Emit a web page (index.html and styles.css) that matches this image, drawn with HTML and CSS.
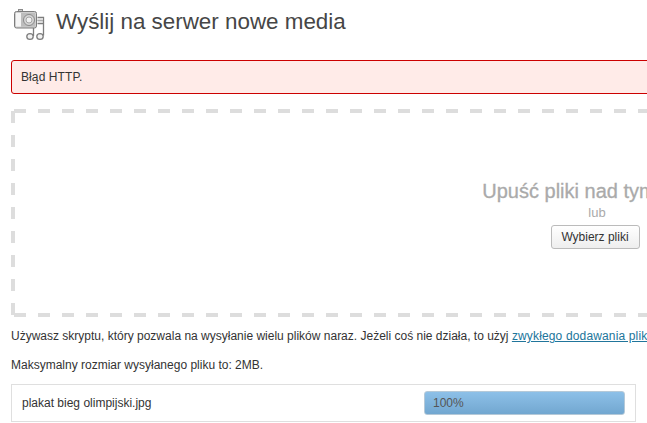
FILE: index.html
```html
<!DOCTYPE html>
<html lang="pl">
<head>
  <meta charset="UTF-8">
  <title>Wyślij na serwer nowe media</title>
  <link rel="stylesheet" href="styles.css">
</head>
<body>
  <div class="wrap">
    <div class="page-head">
      <svg class="page-icon" width="32" height="33" viewBox="14 8 32 33">
        <!-- notes -->
        <path d="M37.500 17.500h6v18M33.500 28v8M37.500 20.500h6M37.500 23.500h6" fill="none" stroke="#7d7d7d" stroke-width="1.300"/>
        <rect x="37.500" y="18" width="5.500" height="2.500" fill="#ddd"/>
        <ellipse cx="30" cy="36.500" rx="3.200" ry="2.900" fill="#f2f2f2" stroke="#7d7d7d" stroke-width="1.300"/>
        <ellipse cx="40" cy="36.500" rx="3.200" ry="2.900" fill="#f2f2f2" stroke="#7d7d7d" stroke-width="1.300"/>
        <!-- camera -->
        <rect x="18.500" y="9.500" width="4" height="3" fill="#ccc" stroke="#8a8a8a"/>
        <rect x="14.500" y="11.500" width="22" height="16.500" rx="2" fill="#cfcfcf" stroke="#7d7d7d"/>
        <rect x="16" y="13" width="5" height="13.500" fill="#f5f5f5"/>
        <rect x="21" y="13" width="14" height="13.500" fill="#bdbdbd"/>
        <circle cx="29" cy="20" r="5.500" fill="#d6d6d6" stroke="#8a8a8a"/>
        <circle cx="29" cy="20" r="3" fill="#f0f0f0" stroke="#a5a5a5"/>
      </svg>
      <h2 class="page-title">Wyślij na serwer nowe media</h2>
    </div>

    <div class="error-box">
      <p>Błąd HTTP.</p>
    </div>

    <div class="drop-area">
      <p class="drop-title">Upuść pliki nad tym polem</p>
      <p class="drop-or">lub</p>
      <button class="select-button">Wybierz pliki</button>
    </div>

    <p class="info first">Używasz skryptu, który pozwala na wysyłanie wielu plików naraz. Jeżeli coś nie działa, to użyj <a href="#">zwykłego dodawania plików</a>.</p>
    <p class="info">Maksymalny rozmiar wysyłanego pliku to: 2MB.</p>

    <div class="media-item">
      <span class="file-name">plakat bieg olimpijski.jpg</span>
      <div class="progress"><span>100%</span></div>
    </div>
  </div>
</body>
</html>
```

FILE: styles.css
```css
html, body {
  height: 100%;
  overflow: hidden;
}

body {
  margin: 0;
  background: #fff;
  color: #333;
  font-family: "Liberation Sans", Arial, sans-serif;
  font-size: 12px;
}

.wrap {
  width: 1172px;
  padding-left: 11px;
}

.page-head {
  display: flex;
  align-items: flex-start;
  height: 60px;
}

.page-icon {
  margin: 8px 0 0 3px;
  flex: none;
}

.page-title {
  margin: 7px 0 0 10px;
  font-size: 22.4px;
  line-height: 29px;
  font-weight: normal;
  color: #464646;
}

.error-box {
  box-sizing: border-box;
  height: 34px;
  background: #ffebe8;
  border: 1px solid #c00;
  border-radius: 3px;
  padding: 0 9px;
}

.error-box p {
  margin: 0;
  line-height: 32px;
  letter-spacing: 0.1px;
}

/* dashes are 12 on / 12 off, a plain dashed border comes out too short */
.drop-area {
  box-sizing: border-box;
  height: 208px;
  margin-top: 15px;
  text-align: center;
  padding-top: 70px;
  background-color: #fff;
  background-image:
    repeating-linear-gradient(90deg, transparent 0 3px, #ddd 3px 15px, transparent 15px 24px),
    repeating-linear-gradient(90deg, transparent 0 3px, #ddd 3px 15px, transparent 15px 24px),
    repeating-linear-gradient(180deg, transparent 0 2px, #ddd 2px 14px, transparent 14px 24px),
    repeating-linear-gradient(180deg, transparent 0 2px, #ddd 2px 14px, transparent 14px 24px);
  background-size: 100% 4px, 100% 4px, 4px 100%, 4px 100%;
  background-position: 0 0, 0 100%, 0 0, 100% 0;
  background-repeat: no-repeat;
}

.drop-title {
  margin: 0 0 0 4px;
  font-size: 20px;
  line-height: 24px;
  font-weight: normal;
  color: #aaa;
  -webkit-text-stroke: 0.3px #aaa;
}

.drop-or {
  margin: 0;
  font-size: 13px;
  line-height: 19px;
  color: #aaa;
}

.select-button {
  box-sizing: border-box;
  width: 89px;
  height: 24px;
  margin-top: 3px;
  margin-right: 4px;
  padding: 0;
  font-family: inherit;
  font-size: 12px;
  color: #333;
  background: linear-gradient(#fff, #eee);
  border: 1px solid #bbb;
  border-radius: 3px;
}

.info {
  margin: 14px 0 0;
  line-height: 15px;
  color: #333;
}

.info.first {
  margin-top: 12px;
}

.info a {
  color: #21759b;
  letter-spacing: 0.15px;
}

.media-item {
  box-sizing: border-box;
  display: flex;
  align-items: center;
  justify-content: space-between;
  width: 625px;
  height: 38px;
  margin-top: 11px;
  padding: 0 10px;
  border: 1px solid #dfdfdf;
}

.progress {
  box-sizing: border-box;
  width: 201px;
  height: 24px;
  padding-left: 8px;
  line-height: 23px;
  color: #555;
  background: linear-gradient(#8dc0e8, #72a7d0);
  border: 1px solid #b5c9d8;
  border-radius: 3px;
}
```
